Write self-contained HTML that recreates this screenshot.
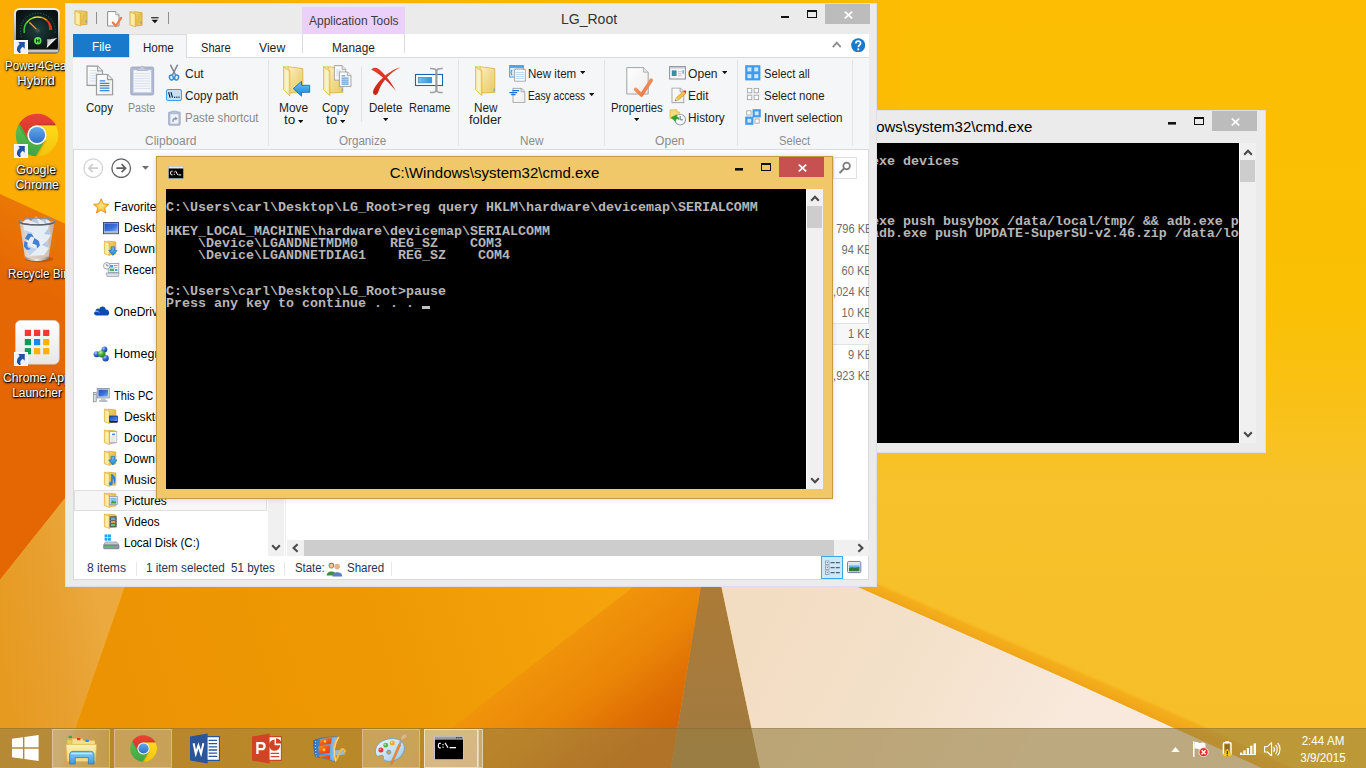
<!DOCTYPE html>
<html>
<head>
<meta charset="utf-8">
<title>Desktop</title>
<style>
*{box-sizing:border-box;margin:0;padding:0}
html,body{width:1366px;height:768px;overflow:hidden;background:#FCBD03;font-family:"Liberation Sans",sans-serif;}
.abs{position:absolute}
#wall{position:absolute;left:0;top:0;width:1366px;height:768px}
/* desktop icons */
.dlabel{position:absolute;color:#fff;font-size:12.5px;line-height:15px;text-align:center;white-space:nowrap;text-shadow:1px 1px 1px rgba(0,0,0,.95),0 1px 2px rgba(0,0,0,.85),0 0 3px rgba(0,0,0,.55)}
.dlabel span{display:inline-block;transform-origin:50% 50%;transform:scaleX(.93)}
/* cmd windows */
.cmd{position:absolute;width:677px;height:343px}
.cmd .blk{position:absolute;left:10px;top:33px;width:640px;height:300px;background:#000;overflow:hidden}
.cmd .sb{position:absolute;left:650px;top:33px;width:17px;height:300px;background:#F0F0F0;border-left:1px solid #fff}
.cmd .thumb{position:absolute;left:0px;top:17px;width:15px;height:22px;background:#CDCDCD}
.cmd .ttl{position:absolute;left:0;top:6px;width:677px;text-align:center;font-size:15.5px;line-height:22px;transform:scaleX(0.969);color:#000;white-space:nowrap}
.row{position:absolute;left:0;margin-top:1px;height:12px;line-height:12px;font-family:"Liberation Mono",monospace;font-weight:bold;font-size:13.333px;color:#B6B6B6;white-space:pre;letter-spacing:0}
/* explorer */
#exp{position:absolute;left:65px;top:3px;width:812px;height:584px;background:#EBEBEB;box-shadow:inset 0 0 0 1px #DCDFE8}
#expi{position:absolute;left:1px;top:0;width:810px;height:584px}
.t12{position:absolute;font-size:12px;line-height:14px;color:#1E1E1E;white-space:nowrap}
.gray{color:#8A8A8A}
.grp{position:absolute;font-size:12px;line-height:14px;color:#8C8C8C;white-space:nowrap;text-align:center}
.vsep{position:absolute;width:1px;background:#E2E3E4}
.nav{position:absolute;margin-top:1px;font-size:12px;line-height:14px;color:#000;white-space:nowrap}

.s{display:inline-block;transform-origin:0 50%;transform:scaleX(.92)}
.sc{display:inline-block;transform-origin:50% 50%}
.sz{position:absolute;margin-top:1px;right:-3px;font-size:12px;line-height:14px;color:#6D6D6D;white-space:nowrap;transform-origin:100% 50%;transform:scaleX(.92)}
.st{position:absolute;font-size:12px;line-height:14px;color:#1E3555;white-space:nowrap}
/* taskbar */
.clk{position:absolute;left:1283px;width:80px;text-align:center;color:#fff;font-size:12px;line-height:14px;white-space:nowrap;transform:scaleX(.97)}
#tb{position:absolute;left:0;top:728px;width:1366px;height:40px;background:rgba(150,127,66,.6)}
.tbtn{position:absolute;top:1px;height:39px;background:rgba(255,255,255,.22);box-shadow:inset 0 0 0 1px rgba(255,255,255,.28)}
</style>
</head>
<body>
<!-- WALLPAPER -->
<svg id="wall" viewBox="0 0 1366 768">
<defs>
<linearGradient id="gRight" x1="0" y1="0" x2="0" y2="1"><stop offset="0" stop-color="#FCBD03"/><stop offset=".39" stop-color="#FAC004"/><stop offset=".52" stop-color="#F9C116"/><stop offset=".63" stop-color="#F7C22B"/><stop offset="1" stop-color="#F6BD27"/></linearGradient>
<linearGradient id="gTopL" x1="0" y1="0" x2="1" y2="0"><stop offset="0" stop-color="#FBAD03"/><stop offset="1" stop-color="#FCBC03"/></linearGradient>
<linearGradient id="gDk" gradientUnits="userSpaceOnUse" x1="35" y1="210" x2="5" y2="276"><stop offset="0" stop-color="#EA7806"/><stop offset="1" stop-color="#E56703"/></linearGradient>
<linearGradient id="gBand" gradientUnits="userSpaceOnUse" x1="0" y1="660" x2="105" y2="640"><stop offset="0" stop-color="#E69A20"/><stop offset=".6" stop-color="#E8A030"/><stop offset="1" stop-color="#EBA93E"/></linearGradient>
<linearGradient id="gMain" gradientUnits="userSpaceOnUse" x1="120" y1="740" x2="640" y2="590"><stop offset="0" stop-color="#EC9303"/><stop offset=".5" stop-color="#EE9903"/><stop offset=".8" stop-color="#F3A009"/><stop offset="1" stop-color="#F6A40D"/></linearGradient>
<linearGradient id="gOr" gradientUnits="userSpaceOnUse" x1="540" y1="660" x2="625.800" y2="770.600"><stop offset="0" stop-color="#F0940A"/><stop offset=".4" stop-color="#EA8607"/><stop offset=".75" stop-color="#DE6E04"/><stop offset="1" stop-color="#D66202"/></linearGradient>
<linearGradient id="gCream" gradientUnits="userSpaceOnUse" x1="760" y1="600" x2="1050" y2="760"><stop offset="0" stop-color="#F2DDC2"/><stop offset=".5" stop-color="#F4E1CA"/><stop offset="1" stop-color="#F8E9DC"/></linearGradient>
<linearGradient id="gShadow" x1="0" y1="0" x2="0" y2="1"><stop offset="0" stop-color="#AC7B36"/><stop offset="1" stop-color="#A07A42"/></linearGradient>
<linearGradient id="gEdge" gradientUnits="userSpaceOnUse" x1="1000" y1="649.600" x2="1005.500" y2="637"><stop offset="0" stop-color="#F0A519"/><stop offset=".7" stop-color="#F4AE1C" stop-opacity=".95"/><stop offset="1" stop-color="#F8B820" stop-opacity="0"/></linearGradient>
</defs>
<rect width="1366" height="768" fill="url(#gRight)"/>
<rect width="900" height="240" fill="url(#gTopL)"/>
<polygon points="0,194 80,230.600 80,479.400 0,580" fill="url(#gDk)"/>
<polygon points="0,580 80,479.400 170,479 127,580 75.600,727.600 61,768 0,768" fill="url(#gBand)"/>
<polygon points="127,580 720,580 690,768 61,768 75.600,727.600" fill="url(#gMain)"/>
<polygon points="642.300,580 702,580 671,768 399.800,768" fill="url(#gOr)"/>
<polygon points="702,580 720,580 760,768 671,768" fill="url(#gShadow)"/>
<polygon points="720,580 842.500,580 866,590.400 1066,678.800 1173.600,727.800 1262,768 760,768" fill="url(#gCream)"/>
<polygon points="842.500,580 866,590.400 1066,678.800 1173.600,727.800 1262,768 1292,768 1179.600,714.800 1072,665.800 872,577.400 848.500,567" fill="url(#gEdge)"/>
</svg>

<!-- SYMBOL DEFS -->
<svg width="0" height="0" style="position:absolute">
<defs>
<linearGradient id="cRed" x1="0" y1="0" x2="0" y2="1"><stop offset="0" stop-color="#EA4335"/><stop offset="1" stop-color="#D2342A"/></linearGradient>
<linearGradient id="cYel" x1="0" y1="0" x2="0" y2="1"><stop offset="0" stop-color="#FFD91A"/><stop offset="1" stop-color="#F2C40C"/></linearGradient>
<linearGradient id="cGrn" x1="0" y1="0" x2="0" y2="1"><stop offset="0" stop-color="#5CC04F"/><stop offset="1" stop-color="#3FA444"/></linearGradient>
<linearGradient id="cBlu" x1="0" y1="0" x2="0" y2="1"><stop offset="0" stop-color="#62AAEA"/><stop offset="1" stop-color="#2E6FC6"/></linearGradient>
<symbol id="chrome" viewBox="0 0 46 46">
<path d="M14.69,27.80 L5.24,11.43 A21.2,21.2 0 0 1 41.90,13.40 L23.00,13.40 A9.6,9.6 0 0 0 14.69,27.80 Z" fill="url(#cRed)"/>
<path d="M23.00,13.40 L41.90,13.40 A21.2,21.2 0 0 1 21.86,44.17 L31.31,27.80 A9.6,9.6 0 0 0 23.00,13.40 Z" fill="url(#cYel)"/>
<path d="M31.31,27.80 L21.86,44.17 A21.2,21.2 0 0 1 5.24,11.43 L14.69,27.80 A9.6,9.6 0 0 0 31.31,27.80 Z" fill="url(#cGrn)"/>
<path d="M23.00,13.40 L41.90,13.40 L41,11.6 L26,12.2Z" fill="#000" opacity=".12"/>
<path d="M31.31,27.80 L21.86,44.17 L24,44.1 L32.6,29Z" fill="#000" opacity=".10"/>
<path d="M14.69,27.80 L5.24,11.43 L4.3,13.2 L13.2,28.6Z" fill="#000" opacity=".12"/>
<circle cx="23" cy="23" r="9.7" fill="#F6F6F6"/>
<circle cx="23" cy="23" r="8.1" fill="url(#cBlu)"/>
</symbol>
<linearGradient id="fBack" x1="0" y1="0" x2="1" y2="1"><stop offset="0" stop-color="#FBF2C0"/><stop offset=".5" stop-color="#F0DB8A"/><stop offset="1" stop-color="#E9CB62"/></linearGradient>
<linearGradient id="fFront" x1="0" y1="0" x2="1" y2="0"><stop offset="0" stop-color="#F7E49A"/><stop offset=".5" stop-color="#FDF6D2"/><stop offset="1" stop-color="#F3DC86"/></linearGradient>
<symbol id="folder" viewBox="0 0 22 32">
<path d="M5,1.4 L20.2,3.4 L20.2,27.6 L7,28.2 Z" fill="url(#fBack)" stroke="#E2B548" stroke-width=".9" stroke-linejoin="round"/>
<path d="M.6,1.5 L7,6.2 L7,31 L.6,24.8 Z" fill="url(#fFront)" stroke="#E4B94C" stroke-width=".9" stroke-linejoin="round"/>
<path d="M.6,1.5 L5,1.4 L7,6.2Z" fill="#F6E296" stroke="#E4B94C" stroke-width=".6"/>
</symbol>
<linearGradient id="fBackS" x1="0" y1="0" x2="1" y2="1"><stop offset="0" stop-color="#F3DC80"/><stop offset=".5" stop-color="#E4BE4C"/><stop offset="1" stop-color="#E9C85E"/></linearGradient>
<linearGradient id="fFrontS" x1="0" y1="0" x2="1" y2="0"><stop offset="0" stop-color="#F6E08A"/><stop offset=".55" stop-color="#FCF0B4"/><stop offset="1" stop-color="#EED06A"/></linearGradient>
<symbol id="folderS" viewBox="0 0 16 16">
<path d="M6.600,1.200 L13.800,2 L13.800,14 L7.600,14.400 Z" fill="url(#fBackS)" stroke="#D9AA3C" stroke-width=".8" stroke-linejoin="round"/>
<path d="M2.400,1.200 L7.800,3.400 L7.800,15.600 L2.400,13.600 Z" fill="url(#fFrontS)" stroke="#DFB244" stroke-width=".8" stroke-linejoin="round"/>
<path d="M2.400,1.200 L6.600,1.200 L7.800,3.400Z" fill="#F4DC84" stroke="#DFB244" stroke-width=".5"/>
</symbol>
<linearGradient id="pgW" x1="0" y1="0" x2="1" y2="1"><stop offset="0" stop-color="#FFFFFF"/><stop offset="1" stop-color="#EDEDED"/></linearGradient>
<symbol id="page" viewBox="0 0 13 16">
<path d="M.6,.6 H8.6 L12.4,4.4 V15.4 H.6 Z" fill="url(#pgW)" stroke="#9C9C9C" stroke-width="1"/>
<path d="M8.6,.6 V4.4 H12.4" fill="#E8E8E8" stroke="#9C9C9C" stroke-width=".8"/>
</symbol>
<linearGradient id="arB" x1="0" y1="0" x2="0" y2="1"><stop offset="0" stop-color="#6CC3F4"/><stop offset="1" stop-color="#1B86D6"/></linearGradient>
<symbol id="dd" viewBox="0 0 5 3"><path d="M0,0 H5 L2.5,3Z" fill="#111"/></symbol>
<symbol id="cmdico" viewBox="0 0 16 13">
<rect x="0" y="0" width="16" height="13" fill="#B8B8B8"/>
<rect x=".8" y=".6" width="14.400" height="1.600" fill="#E8E8E8"/>
<rect x=".8" y="2.600" width="14.400" height="9.600" fill="#000"/>
<path d="M4.600,5.200 H3.200 C2.400,5.200 2.400,8.800 3.200,8.800 H4.600" fill="none" stroke="#fff" stroke-width="1"/>
<rect x="5.800" y="5.600" width="1" height="1" fill="#fff"/><rect x="5.800" y="7.800" width="1" height="1" fill="#fff"/>
<path d="M7.600,4.800 L9.600,8.800" stroke="#fff" stroke-width="1"/>
<rect x="10.400" y="8.400" width="2.800" height="1" fill="#fff"/>
</symbol>
<symbol id="shortcut" viewBox="0 0 14 14">
<rect width="14" height="14" fill="#EEF2F4"/>
<rect x=".5" y=".5" width="13" height="13" fill="none" stroke="#fff" stroke-opacity=".9"/>
<path d="M4.400,2.100 L10.800,2 L10.700,8.700 L8.800,6.800 C6.500,8.200 5.700,10 6.700,12.400 L5.300,12.700 C2.500,11 1.900,7.400 5.700,4 Z" fill="#1E54A2"/>
<path d="M5.300,12.700 C3.600,11.600 2.800,10 3,8.200 C3.600,10 4.600,11.400 6.700,12.400Z" fill="#103C84"/>
</symbol>
</defs>
</svg>
<!-- DESKTOP ICONS -->
<svg class="abs" style="left:14px;top:8px" width="46" height="46" viewBox="0 0 46 46">
<defs>
<linearGradient id="pgF" x1="0" y1="0" x2="0" y2="1"><stop offset="0" stop-color="#F2F2F2"/><stop offset=".5" stop-color="#B8B8B8"/><stop offset="1" stop-color="#7C7C7C"/></linearGradient>
<radialGradient id="pgI" cx=".5" cy=".5" r=".6"><stop offset="0" stop-color="#1F4042"/><stop offset=".6" stop-color="#10201F"/><stop offset="1" stop-color="#0A1112"/></radialGradient>
<linearGradient id="pgA" x1="0" y1="0" x2="1" y2="0"><stop offset="0" stop-color="#3FD23A"/><stop offset=".45" stop-color="#E6E02A"/><stop offset=".75" stop-color="#F59A1E"/><stop offset="1" stop-color="#E8281C"/></linearGradient>
<linearGradient id="pgB" x1="0" y1="0" x2="0" y2="1"><stop offset="0" stop-color="#3A3A3A"/><stop offset=".5" stop-color="#E8E8E8"/><stop offset="1" stop-color="#8A8A8A"/></linearGradient>
<linearGradient id="pgC" x1="0" y1="0" x2="1" y2="1"><stop offset="0" stop-color="#9A9A9A"/><stop offset=".5" stop-color="#F4F4F4"/><stop offset=".55" stop-color="#1A1A1A"/><stop offset="1" stop-color="#0C0C0C"/></linearGradient>
</defs>
<rect x="0" y="0" width="46" height="46" rx="5.5" fill="url(#pgF)"/>
<rect x="2" y="2" width="42" height="40" rx="3.5" fill="url(#pgI)"/>
<rect x="2" y="41" width="42" height="3.6" rx="1.5" fill="url(#pgB)"/>
<path d="M7.67,29.12 A17.4,17.4 0 1 1 40.82,26.22" fill="none" stroke="#2F6E6C" stroke-width="1" stroke-dasharray="1.1 1.7" opacity=".95"/>
<path d="M10.31,24.98 A13.7,13.7 0 0 1 12.72,14.55" fill="none" stroke="#35C83A" stroke-width="1.5"/>
<path d="M12.58,14.74 A13.7,13.7 0 0 1 19.34,9.65" fill="none" stroke="#8FD82E" stroke-width="1.5"/>
<path d="M19.11,9.73 A13.7,13.7 0 0 1 27.58,9.43" fill="none" stroke="#E8DC28" stroke-width="1.5"/>
<path d="M27.35,9.37 A13.7,13.7 0 0 1 33.14,12.58" fill="none" stroke="#F5A31E" stroke-width="1.5"/>
<path d="M33.06,11.57 A14.5,14.5 0 0 1 38.38,21.84 L34.98,22.01 A12,12 0 0 0 32.16,12.64 Z" fill="#E6301E"/>
<path d="M23.800,22.600 L15.800,14.800" stroke="#F7A324" stroke-width="1.3" stroke-linecap="round"/>
<circle cx="23.800" cy="22.600" r="2.100" fill="#4A4E50"/>
<circle cx="23.8" cy="32.8" r="3.7" fill="#63E05C"/>
<path d="M22.5,31 v3.6 M25.1,31 v3.6 M22.5,32.8 h2.6" stroke="#0C3A10" stroke-width="1"/>
<path d="M32.6,40.2 L43.2,29.8 L43.2,40.2 Z" fill="#0B0B0B"/>
<path d="M32.6,40.2 L43.2,29.8 C39,31 35.5,31.5 33,31.2 C33.6,34 33.4,37.5 32.6,40.2 Z" fill="url(#pgC)"/>
</svg>
<svg class="abs" style="left:14px;top:40px" width="14" height="14"><use href="#shortcut"/></svg>
<div class="dlabel" style="left:5px;top:59px;width:120px;text-align:left"><span style="transform-origin:0 50%;transform:scaleX(.93)">Power4Gear</span></div>
<div class="dlabel" style="left:0px;top:74px;width:72px"><span style="transform:scaleX(1.04)">Hybrid</span></div>

<svg class="abs" style="left:14px;top:112.400px" width="46" height="46"><use href="#chrome"/></svg>
<svg class="abs" style="left:14px;top:144px" width="14" height="14"><use href="#shortcut"/></svg>
<div class="dlabel" style="left:0px;top:163px;width:72px"><span style="transform:scaleX(.985)">Google</span></div>
<div class="dlabel" style="left:0px;top:178px;width:73.600px"><span style="transform:scaleX(.975)">Chrome</span></div>

<svg class="abs" style="left:17px;top:215px" width="40" height="48" viewBox="0 0 40 48">
<defs>
<linearGradient id="rbG" x1="0" y1="0" x2="1" y2="0"><stop offset="0" stop-color="#C5CED8" stop-opacity=".85"/><stop offset=".25" stop-color="#EEF3F8" stop-opacity=".8"/><stop offset=".7" stop-color="#DCE5EE" stop-opacity=".75"/><stop offset="1" stop-color="#AEB8C4" stop-opacity=".85"/></linearGradient>
<linearGradient id="rbB" x1="0" y1="0" x2="1" y2="0"><stop offset="0" stop-color="#8C8F94"/><stop offset=".5" stop-color="#F2F2F2"/><stop offset="1" stop-color="#7E8288"/></linearGradient>
</defs>
<ellipse cx="22" cy="44" rx="14" ry="3.2" fill="#6B3206" opacity=".35"/>
<path d="M2.5,6.5 L8,43 C12,46.5 27,46.5 31.5,43 L37.5,6.5 Z" fill="url(#rbG)"/>
<path d="M8,41 C12,45 27,45 31.5,41 L31.2,43.3 C27,46.8 12,46.8 8.3,43.3Z" fill="url(#rbB)"/>
<path d="M6,7 L10,3 L14,6 L19,1.5 L24,5 L28,2.5 L33,6.5 L31,14 L34,20 L30,26 L32,33 L27,40 L12,41 L9,30 L11,22 L7,15 Z" fill="#E6EEF8" opacity=".97"/>
<path d="M14,6 L19,1.5 L22,9 Z M24,5 L28,2.5 L30,10 Z M31,14 L34,20 L27,19 Z M30,26 L32,33 L25,30Z" fill="#B4C8E0"/>
<path d="M9,30 L20,34 L12,41 Z M11,22 L7,15 L16,18Z" fill="#C2D2E6"/>
<g fill="#3F7FD6" transform="translate(-2.600,4.400)">
<path d="M10.5,19 L13.5,14 L17.5,14.5 L19.5,18 L16.5,17.2 L14,21Z"/>
<path d="M20,18.5 L24.5,21.5 L25.5,26 L22.5,29 L22.2,25.5 L18,24 Z"/>
<path d="M10,21.5 L13.2,23.2 L13,27.5 L16.5,29.5 L12.5,30.5 L9.5,27 Z"/>
</g>
<ellipse cx="20" cy="6.5" rx="17.6" ry="3.4" fill="none" stroke="#8A9098" stroke-width="1.4"/>
<path d="M2.4,6.5 A17.6,3.4 0 0 0 37.6,6.5" fill="none" stroke="#5C6168" stroke-width="1.2"/>
</svg>
<div class="dlabel" style="left:8px;top:267px;width:120px;text-align:left"><span style="transform-origin:0 50%;transform:scaleX(.935)">Recycle Bin</span></div>

<svg class="abs" style="left:15px;top:320px" width="45" height="45" viewBox="0 0 45 45">
<defs><linearGradient id="alG" x1="0" y1="0" x2="0" y2="1"><stop offset="0" stop-color="#FFFFFF"/><stop offset="1" stop-color="#E6E6E6"/></linearGradient></defs>
<rect x=".3" y=".3" width="44" height="44" rx="5.5" fill="url(#alG)"/>
<rect x=".3" y=".3" width="44" height="44" rx="5.5" fill="none" stroke="#C9C2B8" stroke-width=".6"/>
<g>
<rect x="9.8" y="9.8" width="6.2" height="6.2" fill="#F8382F"/><rect x="19" y="9.8" width="6.2" height="6.2" fill="#F8382F"/><rect x="28.1" y="9.8" width="6.2" height="6.2" fill="#F8382F"/>
<rect x="9.8" y="19" width="6.2" height="6.2" fill="#0B9D58"/><rect x="19" y="19" width="6.2" height="6.2" fill="#1B87E6"/><rect x="28.1" y="19" width="6.2" height="6.2" fill="#FFB000"/>
<rect x="9.8" y="28.1" width="6.2" height="6.2" fill="#0B9D58"/><rect x="19" y="28.1" width="6.2" height="6.2" fill="#FFB000"/><rect x="28.1" y="28.1" width="6.2" height="6.2" fill="#FFB000"/>
</g>
</svg>
<svg class="abs" style="left:14px;top:352px" width="14" height="14"><use href="#shortcut"/></svg>
<div class="dlabel" style="left:3px;top:371px;width:120px;text-align:left"><span style="transform-origin:0 50%;transform:scaleX(.975)">Chrome App</span></div>
<div class="dlabel" style="left:0px;top:386px;width:73.400px"><span style="transform:scaleX(.955)">Launcher</span></div>

<!-- BACK CMD -->
<div class="cmd" id="cmd2" style="left:589px;top:110px;background:#EBEBEB;box-shadow:inset 0 0 0 1px #DCDFE8">
  <div class="ttl">C:\Windows\system32\cmd.exe</div>
  <div class="abs" style="left:623px;top:1px;width:45px;height:20px;background:#BCBCBC"></div>
  <div class="blk">
    <div class="row" style="top:12px">C:\Users\carl\Desktop\LG_Root&gt;adb.exe devices</div>
    <div class="row" style="top:72px">C:\Users\carl\Desktop\LG_Root&gt;adb.exe push busybox /data/local/tmp/ &amp;&amp; adb.exe p</div>
    <div class="row" style="top:84px">ush lg_root.sh /data/local/tmp &amp;&amp; adb.exe push UPDATE-SuperSU-v2.46.zip /data/lo</div>
  </div>
  <div class="sb"><div class="thumb"></div></div>
  <svg class="abs" style="left:12px;top:10px" width="16" height="13"><use href="#cmdico"/></svg>
  <svg class="abs" style="left:579px;top:12.400px" width="8" height="2.600"><rect width="8" height="2.600" fill="#111"/></svg>
  <svg class="abs" style="left:605px;top:7px" width="10" height="8" viewBox="0 0 10 8"><rect x=".5" y="1" width="9" height="6.500" fill="none" stroke="#111" stroke-width="1"/><rect x="0" y="0" width="10" height="2" fill="#111"/></svg>
  <svg class="abs" style="left:641.500px;top:7.600px" width="9" height="8" viewBox="0 0 9 8"><path d="M.8,.6 L8.200,7.400 M8.200,.6 L.8,7.400" stroke="#fff" stroke-width="1.700"/></svg>
  <svg class="abs" style="left:654px;top:39px" width="10" height="7" viewBox="0 0 10 7"><path d="M1.200,5.800 L5,1.800 L8.800,5.800" fill="none" stroke="#4A4A4A" stroke-width="2.100"/></svg>
  <svg class="abs" style="left:654px;top:321px" width="10" height="7" viewBox="0 0 10 7"><path d="M1.200,1.200 L5,5.200 L8.800,1.200" fill="none" stroke="#4A4A4A" stroke-width="2.100"/></svg>
</div>

<!-- EXPLORER -->
<div id="exp"><div id="expi">
  <!-- title bar -->
  <div class="abs" style="left:0;top:0;width:810px;height:31px"></div>
  <div class="abs" style="left:236px;top:4px;width:103px;height:27px;background:#EBD0FA"></div>
  <div class="t12" style="left:243px;top:11px;color:#3C3C3C"><span class="s" style="transform:scaleX(0.997)">Application Tools</span></div>
  <div class="abs" style="left:0;top:6px;width:1046px;text-align:center;font-size:15.5px;line-height:20px;color:#333"><span class="sc" style="transform:scaleX(0.906)">LG_Root</span></div>
  <div class="abs" style="left:759px;top:1px;width:45px;height:20px;background:#BCBCBC"></div>
  <!-- tab row -->
  <div class="abs" style="left:7px;top:31px;width:796px;height:23px;background:#fff"></div>
  <div class="abs" style="left:7px;top:31px;width:56px;height:23px;background:#1979CA"></div>
  <div class="t12" style="left:26px;top:37px;color:#fff"><span class="s" style="transform:scaleX(0.982)">File</span></div>
  <div class="abs" style="left:63px;top:31px;width:58px;height:24px;background:#F5F6F7;border:1px solid #DADBDC;border-bottom:none;z-index:2"></div>
  <div class="t12" style="left:77px;top:38px;z-index:3"><span class="s" style="transform:scaleX(0.962)">Home</span></div>
  <div class="t12" style="left:135px;top:38px"><span class="s" style="transform:scaleX(0.924)">Share</span></div>
  <div class="t12" style="left:193px;top:38px"><span class="s" style="transform:scaleX(1.016)">View</span></div>
  <div class="abs" style="left:236px;top:31px;width:1px;height:19px;background:#DADBDC"></div>
  <div class="abs" style="left:338px;top:31px;width:1px;height:19px;background:#DADBDC"></div>
  <div class="t12" style="left:266px;top:38px"><span class="s" style="transform:scaleX(0.987)">Manage</span></div>
  <!-- ribbon body -->
  <div class="abs" style="left:7px;top:54px;width:796px;height:93px;background:#F5F6F7;border-top:1px solid #DADBDC;border-bottom:1px solid #DADBDC"></div>
  <div class="t12" style="left:20px;top:98px"><span class="s" style="transform:scaleX(0.964)">Copy</span></div>
  <div class="t12 gray" style="left:62px;top:98px"><span class="s" style="transform:scaleX(0.886)">Paste</span></div>
  <div class="t12" style="left:119px;top:64px"><span class="s" style="transform:scaleX(1.001)">Cut</span></div>
  <div class="t12" style="left:119px;top:86px"><span class="s" style="transform:scaleX(0.974)">Copy path</span></div>
  <div class="t12 gray" style="left:119px;top:108px"><span class="s" style="transform:scaleX(0.959)">Paste shortcut</span></div>
  <div class="grp" style="left:79px;top:131px"><span class="s" style="transform:scaleX(0.999)">Clipboard</span></div>
  <div class="vsep" style="left:202px;top:57px;height:86px"></div>
  <div class="t12" style="left:213px;top:98px"><span class="s" style="transform:scaleX(0.992)">Move</span></div>
  <div class="t12" style="left:218px;top:110px"><span class="s" style="transform:scaleX(1.130)">to</span></div>
  <div class="t12" style="left:256px;top:98px"><span class="s" style="transform:scaleX(0.964)">Copy</span></div>
  <div class="t12" style="left:260px;top:110px"><span class="s" style="transform:scaleX(1.130)">to</span></div>
  <div class="vsep" style="left:295px;top:64px;height:55px"></div>
  <div class="t12" style="left:303px;top:98px"><span class="s" style="transform:scaleX(0.963)">Delete</span></div>
  <div class="t12" style="left:343px;top:98px"><span class="s" style="transform:scaleX(0.913)">Rename</span></div>
  <div class="grp" style="left:273px;top:131px"><span class="s" style="transform:scaleX(0.969)">Organize</span></div>
  <div class="vsep" style="left:392px;top:57px;height:86px"></div>
  <div class="t12" style="left:408px;top:98px"><span class="s" style="transform:scaleX(0.979)">New</span></div>
  <div class="t12" style="left:403px;top:110px"><span class="s" style="transform:scaleX(1.079)">folder</span></div>
  <div class="t12" style="left:462px;top:64px"><span class="s" style="transform:scaleX(0.964)">New item</span></div>
  <div class="t12" style="left:462px;top:86px"><span class="s" style="transform:scaleX(0.849)">Easy access</span></div>
  <div class="grp" style="left:454px;top:131px"><span class="s" style="transform:scaleX(0.979)">New</span></div>
  <div class="vsep" style="left:538px;top:57px;height:86px"></div>
  <div class="t12" style="left:545px;top:98px"><span class="s" style="transform:scaleX(0.947)">Properties</span></div>
  <div class="t12" style="left:622px;top:64px"><span class="s" style="transform:scaleX(1.008)">Open</span></div>
  <div class="t12" style="left:622px;top:86px"><span class="s" style="transform:scaleX(0.991)">Edit</span></div>
  <div class="t12" style="left:622px;top:108px"><span class="s" style="transform:scaleX(0.985)">History</span></div>
  <div class="grp" style="left:589px;top:131px"><span class="s" style="transform:scaleX(1.008)">Open</span></div>
  <div class="vsep" style="left:671px;top:57px;height:86px"></div>
  <div class="t12" style="left:698px;top:64px"><span class="s" style="transform:scaleX(0.938)">Select all</span></div>
  <div class="t12" style="left:698px;top:86px"><span class="s" style="transform:scaleX(0.956)">Select none</span></div>
  <div class="t12" style="left:698px;top:108px"><span class="s" style="transform:scaleX(0.974)">Invert selection</span></div>
  <div class="grp" style="left:713px;top:131px"><span class="s" style="transform:scaleX(0.935)">Select</span></div>
  <div class="vsep" style="left:786px;top:57px;height:86px"></div>
<!-- RIBBON ICONS -->
<svg class="abs" style="left:20px;top:62px" width="28" height="31" viewBox="0 0 28 31">
<g transform="translate(.2,.2) scale(1.32)"><use href="#page" width="13" height="16"/><path d="M2.5,4 h5 M2.5,6 h7.5 M2.5,8 h7.5 M2.5,10 h7.5 M2.5,12 h7.5" stroke="#CFE0F2" stroke-width=".7"/></g>
<g transform="translate(9.6,8.6) scale(1.38)"><use href="#page" width="13" height="16"/><path d="M3,5.2 h4 M3,7 h7 M3,8.8 h7 M3,10.6 h7 M3,12.4 h7" stroke="#3D86D4" stroke-width=".9"/></g>
</svg>
<svg class="abs" style="left:64px;top:61px" width="25" height="32" viewBox="0 0 25 32">
<rect x=".7" y="3" width="23" height="28" rx="1.6" fill="#AEB8D0" stroke="#9CA6C0" stroke-width=".8"/>
<rect x="3.2" y="6" width="18" height="22.6" fill="#F4F6FA" stroke="#C4CCDE" stroke-width=".6"/>
<path d="M4.5,9.5h15.4M4.5,12h15.4M4.5,14.5h15.4M4.5,17h15.4M4.5,19.500h15.4M4.5,22h15.4M4.5,24.500h15.4" stroke="#D3DBEA" stroke-width=".8"/>
<path d="M7,6.4 V4.2 H10 C10,1.6 14.4,1.6 14.4,4.2 H17.400 V6.400 Z" fill="#C3CBDD" stroke="#A2ACC4" stroke-width=".7"/>
</svg>
<svg class="abs" style="left:101px;top:61px" width="14" height="18" viewBox="0 0 14 18">
<path d="M3.6,1.2 L8.6,11.2 M10.400,1.2 L5.4,11.2" stroke="#7E8794" stroke-width="1.5" stroke-linecap="round"/>
<ellipse cx="4.4" cy="13.600" rx="1.900" ry="2.500" fill="none" stroke="#2E8FDD" stroke-width="1.5" transform="rotate(-18 4.4 13.6)"/>
<ellipse cx="9.600" cy="13.600" rx="1.900" ry="2.500" fill="none" stroke="#2E8FDD" stroke-width="1.5" transform="rotate(18 9.6 13.6)"/>
</svg>
<svg class="abs" style="left:100px;top:86px" width="16" height="12" viewBox="0 0 16 12">
<rect x=".5" y=".5" width="15" height="11" rx="1.5" fill="#BFE1FB" stroke="#3F9CE6"/>
<path d="M2.6,3.2 L4.1,8.6 M5,3.2 L6.500,8.600" stroke="#1A1A1A" stroke-width="1.1"/>
<rect x="8" y="7.600" width="1.2" height="1.2" fill="#1A1A1A"/><rect x="10.200" y="7.600" width="1.2" height="1.2" fill="#1A1A1A"/><rect x="12.400" y="7.600" width="1.2" height="1.2" fill="#1A1A1A"/>
</svg>
<svg class="abs" style="left:102px;top:107px" width="13" height="16" viewBox="0 0 13 16">
<rect x=".6" y="2" width="11.6" height="13.2" rx="1" fill="#B4BED4" stroke="#9AA6C0" stroke-width=".8"/>
<rect x="2.4" y="4.200" width="8" height="9.400" fill="#EEF1F7"/>
<path d="M3.8,2.6 V1.2 H8.800 V2.600" fill="#C6CEDF" stroke="#9AA6C0" stroke-width=".7"/>
<path d="M4.2,12 C4,9 5.4,7.800 7.200,7.800 L7,6.400 L9.800,8.600 L7.400,10.600 L7.300,9.400 C6,9.400 5.400,10.200 5.600,12Z" fill="#8E9AB6"/>
</svg>
<svg class="abs" style="left:216.5px;top:61.5px" width="30" height="33" viewBox="0 0 30 33">
<use href="#folder" x="0" y="0" width="21.6" height="32"/>
<path d="M10.300,23.700 L18.500,16.300 V20.300 H26.700 V27.300 H18.500 V31.100 Z" fill="url(#arB)" stroke="#1670BE" stroke-width=".9" stroke-linejoin="round"/>
</svg>
<svg class="abs" style="left:256.5px;top:61.5px" width="31" height="33" viewBox="0 0 31 33">
<use href="#folder" x="0" y="0" width="21.6" height="32"/>
<rect x="18.600" y="23.500" width="1.1" height="2.600" fill="#5AA0E0"/>
<g transform="translate(10.700,.1) scale(.98)"><use href="#page" width="13" height="16"/><path d="M2.5,5 h4 M2.5,7 h5 M2.5,9 h5 M2.5,11 h5" stroke="#BBD3EE" stroke-width=".8"/></g>
<g transform="translate(15.700,6.300) scale(1)"><use href="#page" width="13" height="16"/><path d="M2.8,4.6 h3.600 M2.800,6.800 h7 M2.800,8.800 h7 M2.800,10.800 h7 M2.800,12.800 h7" stroke="#3D86D4" stroke-width="1"/></g>
</svg>
<svg class="abs" style="left:304px;top:63px" width="32" height="30" viewBox="0 0 32 30">
<defs><linearGradient id="dX" x1="0" y1="0" x2="0" y2="1"><stop offset="0" stop-color="#E8402C"/><stop offset="1" stop-color="#C8200F"/></linearGradient></defs>
<path d="M1.2,3.600 C3,1.400 6,1.200 8,2.600 C14,7 20.500,15 26,25.400 C20,17.500 12,9.500 1.200,3.600 Z" fill="url(#dX)"/>
<path d="M30.400,1.600 C22,3 11,12 5,21 C3,24 2,27.500 4.600,28.800 C7.500,29.800 8.200,26 9.200,23.600 C13,14.500 21,6 30.400,1.600 Z" fill="url(#dX)"/>
</svg>
<svg class="abs" style="left:348px;top:64px" width="31" height="27" viewBox="0 0 31 27">
<defs><linearGradient id="rnB" x1="0" y1="0" x2="1" y2="0"><stop offset="0" stop-color="#77C0F0"/><stop offset="1" stop-color="#2C93DA"/></linearGradient></defs>
<rect x="1.5" y="7.500" width="27" height="11" fill="#fff" stroke="#1764B2" stroke-width="1.100"/>
<rect x="4.200" y="10.300" width="13.600" height="5.600" fill="url(#rnB)" stroke="#2A86CE" stroke-width=".6"/>
<path d="M22.400,2 V25" stroke="#9A9A9A" stroke-width="2.200"/>
<path d="M16,1.500 C19,1.300 21.500,1.800 22.400,3.400 C23.300,1.800 25.800,1.300 28.800,1.500 M16,25.500 C19,25.700 21.500,25.200 22.400,23.600 C23.300,25.200 25.800,25.700 28.800,25.500" stroke="#A2A2A2" stroke-width="1.500" fill="none"/>
</svg>
<svg class="abs" style="left:408.5px;top:61.5px" width="23" height="33" viewBox="0 0 23 33">
<use href="#folder" x="0" y="0" width="21.6" height="32"/>
<rect x="18.600" y="23.500" width="1.1" height="2.600" fill="#5AA0E0"/>
</svg>
<svg class="abs" style="left:442.5px;top:61.5px" width="18" height="17" viewBox="0 0 18 17">
<rect x=".6" y=".6" width="13.800" height="11.400" fill="#D6EBFA" stroke="#4AA0E4" stroke-width="1"/>
<rect x=".6" y=".6" width="13.800" height="2.200" fill="#4AA0E4"/>
<path d="M3,5 C1.800,6.500 1.800,8.500 3,10" stroke="#2F7FCC" stroke-width="1" fill="none"/>
<path d="M5.600,4.400 H16.400 V16.200 H5.600Z" fill="#fff" stroke="#A0A0A0" stroke-width=".9"/>
<path d="M6.800,4.400 c.4,-1.400 1.400,-1.400 1.800,0 c.4,-1.400 1.400,-1.400 1.800,0 c.4,-1.400 1.400,-1.400 1.800,0 c.4,-1.400 1.400,-1.400 1.800,0" fill="#fff" stroke="#A0A0A0" stroke-width=".7"/>
<path d="M6.600,7.400h8.800M6.600,9.400h8.800M6.600,11.400h8.800M6.600,13.400h8.800" stroke="#A9C8EA" stroke-width=".8"/>
</svg>
<svg class="abs" style="left:442.5px;top:83.5px" width="18" height="17" viewBox="0 0 18 17">
<g transform="translate(3.300,.6) scale(1.020,.96)"><use href="#page" width="13" height="16"/></g>
<path d="M3.400,3.600 H10.200 M.4,5.600 H8.200 M2.200,7.600 H6.600" stroke="#1F6FE0" stroke-width="1.100"/>
</svg>
<svg class="abs" style="left:559.5px;top:63.5px" width="28" height="31" viewBox="0 0 28 31">
<defs><linearGradient id="prC" x1="0" y1="0" x2="1" y2="1"><stop offset="0" stop-color="#F6A070"/><stop offset="1" stop-color="#EC7038"/></linearGradient></defs>
<path d="M.8,.6 H17.600 L22.200,5.200 V27 H.8 Z" fill="url(#pgW)" stroke="#A2A2A2" stroke-width="1"/>
<path d="M17.600,.6 V5.200 H22.200" fill="#EAEAEA" stroke="#A2A2A2" stroke-width=".8"/>
<path d="M9.600,22.400 L15.500,28 L25.200,13.200" fill="none" stroke="url(#prC)" stroke-width="3.600" stroke-linecap="round" stroke-linejoin="round"/>
</svg>
<svg class="abs" style="left:602.5px;top:62.8px" width="17" height="14" viewBox="0 0 17 14">
<defs><linearGradient id="opG" x1="0" y1="0" x2="1" y2="1"><stop offset="0" stop-color="#2E7FD0"/><stop offset="1" stop-color="#3FA070"/></linearGradient></defs>
<rect x=".6" y=".6" width="15.800" height="12.400" fill="#F6F7F9" stroke="#8C8EA0" stroke-width="1"/>
<rect x="1" y="1" width="15" height="1.600" fill="#C6CAD6"/>
<rect x="2.800" y="4.400" width="4.800" height="5.600" fill="url(#opG)"/>
<path d="M9,5.600h3.600M9,7.600h3.600M9,9.600h3.600" stroke="#C2C2C8" stroke-width=".9"/>
<rect x="13.600" y="4.200" width="1" height="3.600" fill="#2E86D8"/>
</svg>
<svg class="abs" style="left:604.5px;top:83.8px" width="16" height="17" viewBox="0 0 16 17">
<g transform="translate(.3,.4) scale(1.020,1)"><use href="#page" width="13" height="16"/></g>
<path d="M4.200,13.800 L5.400,10.600 L12.600,4.200 L14.800,6.400 L7.400,12.900 Z" fill="#F4C544" stroke="#B98A1E" stroke-width=".6"/>
<path d="M12.600,4.200 L13.600,3.300 C14.400,2.700 15.800,4.100 15.200,5 L14.800,6.400Z" fill="#E0403A"/>
<path d="M4.200,13.800 L5.400,10.600 L7.400,12.900Z" fill="#E8D4A8"/>
<path d="M4.200,13.800 L4.700,12.500 L5.500,13.400Z" fill="#333"/>
</svg>
<svg class="abs" style="left:602.5px;top:105.5px" width="18" height="18" viewBox="0 0 18 18">
<path d="M1,.8 H8 V3 H10.400 V9.600 H1Z" fill="#F5DC7A" stroke="#E0B448" stroke-width=".7"/>
<circle cx="11.200" cy="10.600" r="5.400" fill="#F4F6F8" stroke="#9AA2AC" stroke-width="1.100"/>
<path d="M11.200,7 V10.800 H14" stroke="#6E7680" stroke-width="1" fill="none"/>
<path d="M2.200,8.600 L7.600,6 L7,8 C9,7.500 10,8.600 10,10.400 C9.200,9.600 8,9.700 6.600,10.400 L6.400,12.400Z" fill="#2FA82A" stroke="#1E8A1C" stroke-width=".5"/>
</svg>
<svg class="abs" style="left:678.5px;top:61.5px" width="16" height="16" viewBox="0 0 16 16">
<rect x=".2" y=".2" width="15.200" height="15.200" fill="#3F9BEE"/>
<rect x="2.400" y="2.400" width="4" height="4" fill="#CFE6FB"/><rect x="9.200" y="2.400" width="4" height="4" fill="#CFE6FB"/>
<rect x="2.400" y="9.200" width="4" height="4" fill="#CFE6FB"/><rect x="9.200" y="9.200" width="4" height="4" fill="#CFE6FB"/>
</svg>
<svg class="abs" style="left:679.5px;top:83.5px" width="15" height="15" viewBox="0 0 15 15">
<rect x="1.400" y="1.400" width="4.400" height="4.400" fill="#fff" stroke="#A6A6A6" stroke-width=".9"/><rect x="8.200" y="1.400" width="4.400" height="4.400" fill="#fff" stroke="#A6A6A6" stroke-width=".9"/>
<rect x="1.400" y="8.200" width="4.400" height="4.400" fill="#fff" stroke="#A6A6A6" stroke-width=".9"/><rect x="8.200" y="8.200" width="4.400" height="4.400" fill="#fff" stroke="#A6A6A6" stroke-width=".9"/>
</svg>
<svg class="abs" style="left:678.5px;top:105.5px" width="17" height="17" viewBox="0 0 17 17">
<rect x="7.600" y=".2" width="8.200" height="8.200" fill="#3F9BEE"/><rect x="9.800" y="2.400" width="3.800" height="3.800" fill="#CFE6FB"/>
<rect x=".2" y="7.600" width="8.200" height="8.200" fill="#3F9BEE"/><rect x="2.400" y="9.800" width="3.800" height="3.800" fill="#CFE6FB"/>
<rect x="1.800" y="1.800" width="4.200" height="4.200" fill="#fff" stroke="#A6A6A6" stroke-width=".9"/>
<rect x="10" y="10" width="4.200" height="4.200" fill="#fff" stroke="#A6A6A6" stroke-width=".9"/>
</svg>
<svg class="abs" style="left:231.5px;top:116.7px" width="5.4" height="3.2" viewBox="0 0 5.400 3.200"><use href="#dd" width="5.400" height="3.200"/></svg>
<svg class="abs" style="left:274px;top:116.7px" width="5.4" height="3.2" viewBox="0 0 5.400 3.200"><use href="#dd" width="5.400" height="3.200"/></svg>
<svg class="abs" style="left:316.6px;top:115px" width="5.4" height="3.2" viewBox="0 0 5.400 3.200"><use href="#dd" width="5.400" height="3.200"/></svg>
<svg class="abs" style="left:567.9px;top:115px" width="5.4" height="3.2" viewBox="0 0 5.400 3.200"><use href="#dd" width="5.400" height="3.200"/></svg>
<svg class="abs" style="left:513.9px;top:68.1px" width="5.4" height="3.2" viewBox="0 0 5.400 3.200"><use href="#dd" width="5.400" height="3.200"/></svg>
<svg class="abs" style="left:522.8px;top:90.1px" width="5.4" height="3.2" viewBox="0 0 5.400 3.200"><use href="#dd" width="5.400" height="3.200"/></svg>
<svg class="abs" style="left:656px;top:68.1px" width="5.4" height="3.2" viewBox="0 0 5.400 3.200"><use href="#dd" width="5.400" height="3.200"/></svg>
  <!-- body -->

  <div class="abs" style="left:7px;top:147px;width:796px;height:430px;background:#fff;border-left:1px solid #DADADA;border-bottom:1px solid #DADADA;border-right:1px solid #DADADA"></div>
  <!-- search box -->
  <div class="abs" style="left:767px;top:154px;width:24px;height:22px;border:1px solid #E2E2E2;background:#fff"></div>
  <!-- nav pane -->
  <div class="abs" style="left:8px;top:487px;width:193px;height:21px;background:#F6F6F6;border:1px solid #DEDEDE"></div>
  <div class="nav" style="left:48px;top:196px"><span class="s" style="transform:scaleX(0.977)">Favorites</span></div>
  <div class="nav" style="left:58px;top:217px"><span class="s" style="transform:scaleX(1.017)">Desktop</span></div>
  <div class="nav" style="left:58px;top:238px"><span class="s" style="transform:scaleX(1.015)">Downloads</span></div>
  <div class="nav" style="left:58px;top:259px"><span class="s" style="transform:scaleX(0.971)">Recent places</span></div>
  <div class="nav" style="left:48px;top:301px"><span class="s" style="transform:scaleX(0.999)">OneDrive</span></div>
  <div class="nav" style="left:48px;top:343px"><span class="s" style="transform:scaleX(1.045)">Homegroup</span></div>
  <div class="nav" style="left:48px;top:385px"><span class="s" style="transform:scaleX(0.920)">This PC</span></div>
  <div class="nav" style="left:58px;top:406px"><span class="s" style="transform:scaleX(1.017)">Desktop</span></div>
  <div class="nav" style="left:58px;top:427px"><span class="s" style="transform:scaleX(1.013)">Documents</span></div>
  <div class="nav" style="left:58px;top:448px"><span class="s" style="transform:scaleX(1.015)">Downloads</span></div>
  <div class="nav" style="left:58px;top:469px"><span class="s" style="transform:scaleX(1.012)">Music</span></div>
  <div class="nav" style="left:58px;top:490px"><span class="s" style="transform:scaleX(0.987)">Pictures</span></div>
  <div class="nav" style="left:58px;top:511px"><span class="s" style="transform:scaleX(0.976)">Videos</span></div>
  <div class="nav" style="left:58px;top:532px"><span class="s" style="transform:scaleX(0.962)">Local Disk (C:)</span></div>
  <div class="abs" style="left:202px;top:178px;width:16px;height:375px;background:#F0F0F0"></div><div class="abs" style="left:219px;top:178px;width:1px;height:375px;background:#EEE"></div>
  <!-- right col sizes -->
  <div class="abs" style="left:767px;top:320px;width:36px;height:22px;background:#F7F7F7;border-top:1px solid #E3E3E3;border-bottom:1px solid #E3E3E3"></div>
  <div class="abs" style="left:703px;top:178px;width:100px;height:240px;overflow:hidden">
    <div class="sz" style="top:40px">796 KB</div>
    <div class="sz" style="top:61px">94 KB</div>
    <div class="sz" style="top:82px">60 KB</div>
    <div class="sz" style="top:103px">1,024 KB</div>
    <div class="sz" style="top:124px">10 KB</div>
    <div class="sz" style="top:145px">1 KB</div>
    <div class="sz" style="top:166px">9 KB</div>
    <div class="sz" style="top:187px">1,923 KB</div>
  </div>
  <!-- hscroll -->
  <div class="abs" style="left:221px;top:537px;width:582px;height:16px;background:#F0F0F0"></div>
  <div class="abs" style="left:238px;top:537px;width:530px;height:16px;background:#CDCDCD"></div>
  <!-- status bar -->
  <div class="st" style="left:21px;top:558px"><span class="s" style="transform:scaleX(1.008)">8 items</span></div>
  <div class="st" style="left:80px;top:558px"><span class="s" style="transform:scaleX(0.975)">1 item selected</span></div>
  <div class="st" style="left:165px;top:558px"><span class="s" style="transform:scaleX(0.967)">51 bytes</span></div>
  <div class="st" style="left:229px;top:558px"><span class="s" style="transform:scaleX(0.947)">State:</span></div>
  <div class="st" style="left:281px;top:558px"><span class="s" style="transform:scaleX(0.961)">Shared</span></div>
  <div class="abs" style="left:70px;top:559px;width:1px;height:14px;background:#E8E8E8"></div>
  <div class="abs" style="left:218px;top:559px;width:1px;height:14px;background:#E8E8E8"></div>
  <div class="abs" style="left:325px;top:559px;width:1px;height:14px;background:#E8E8E8"></div>
  <div class="abs" style="left:755px;top:553px;width:22px;height:23px;background:#CDE8F8;border:1px solid #3DA7E0"></div>
<!-- TITLE/NAV ICONS -->
<svg class="abs" style="left:7.5px;top:7px" width="15" height="17" viewBox="0 0 15 17"><use href="#folderS" x="-1.600" y="-.5" width="17" height="17"/><rect x="11.600" y="10.400" width="1" height="2.200" fill="#4A9AE0"/></svg>
<div class="abs" style="left:30px;top:9px;width:1px;height:12px;background:#8E8E8E"></div>
<svg class="abs" style="left:41px;top:8px" width="16" height="17" viewBox="0 0 16 17">
<path d="M.6,.6 H8.800 L12,3.800 V15 H.6 Z" fill="#FCFCFC" stroke="#8E8E8E" stroke-width="1"/>
<path d="M8.800,.6 V3.800 H12" fill="#EAEAEA" stroke="#8E8E8E" stroke-width=".7"/>
<path d="M5.800,11.600 L8.800,15 L14.200,6.800" fill="none" stroke="#F07C48" stroke-width="2.200" stroke-linecap="round" stroke-linejoin="round"/>
</svg>
<svg class="abs" style="left:62.5px;top:8px" width="15" height="17" viewBox="0 0 15 17"><use href="#folderS" x="-1.600" y="-.5" width="17" height="17"/><rect x="11.600" y="10.400" width="1" height="2.200" fill="#4A9AE0"/></svg>
<svg class="abs" style="left:84.5px;top:13.8px" width="8" height="7" viewBox="0 0 8 7"><rect x=".2" y=".2" width="7.400" height="1.100" fill="#111"/><path d="M.6,2.800 H7.200 L3.900,6.200Z" fill="#111"/></svg>
<div class="abs" style="left:102px;top:9px;width:1px;height:12px;background:#8E8E8E"></div>
<svg class="abs" style="left:715px;top:12.6px" width="8" height="2.4" viewBox="0 0 8 2.4"><rect width="8" height="2.400" fill="#111"/></svg>
<svg class="abs" style="left:741px;top:7px" width="10" height="8" viewBox="0 0 10 8"><rect x=".5" y="1" width="9" height="6.500" fill="none" stroke="#111" stroke-width="1"/><rect x="0" y="0" width="10" height="2" fill="#111"/></svg>
<svg class="abs" style="left:777.5px;top:7.6px" width="9" height="8" viewBox="0 0 9 8"><path d="M.8,.6 L8.200,7.400 M8.200,.6 L.8,7.400" stroke="#fff" stroke-width="1.700"/></svg>
<svg class="abs" style="left:765.5px;top:38px" width="9.6" height="7" viewBox="0 0 9.6 7"><path d="M.8,6.200 L4.800,1.600 L8.800,6.200" fill="none" stroke="#8E8E8E" stroke-width="1.900"/></svg>
<svg class="abs" style="left:785px;top:34.8px" width="14.4" height="14.4" viewBox="0 0 14.4 14.4"><circle cx="7.200" cy="7.200" r="7" fill="#1979CA"/><path d="M4.900,5.400 C4.900,2.400 9.600,2.400 9.600,5.200 C9.600,7 7.300,7.200 7.300,9.200" fill="none" stroke="#fff" stroke-width="1.700"/><circle cx="7.300" cy="11.400" r="1.050" fill="#fff"/></svg>
<svg class="abs" style="left:16.5px;top:154.7px" width="20.4" height="20.4" viewBox="0 0 20.4 20.4"><circle cx="10.200" cy="10.200" r="9.300" fill="none" stroke="#D4D4D4" stroke-width="1.300"/><path d="M15,10.200 H6 M9.800,6.200 L5.800,10.200 L9.800,14.200" fill="none" stroke="#CFCFCF" stroke-width="1.700"/></svg>
<svg class="abs" style="left:45.3px;top:154.7px" width="20.4" height="20.4" viewBox="0 0 20.4 20.4"><circle cx="10.200" cy="10.200" r="9.300" fill="none" stroke="#5E5E5E" stroke-width="1.300"/><path d="M5.400,10.200 H14.400 M10.600,6.200 L14.600,10.200 L10.600,14.200" fill="none" stroke="#5E5E5E" stroke-width="1.700"/></svg>
<svg class="abs" style="left:75.8px;top:163px" width="7" height="4" viewBox="0 0 7 4"><path d="M0,0 H7 L3.500,3.800Z" fill="#6E6E6E"/></svg>
<svg class="abs" style="left:772px;top:158px" width="14" height="14" viewBox="0 0 14 14"><circle cx="8.600" cy="5" r="3.300" fill="none" stroke="#7A7A7A" stroke-width="1.700"/><path d="M6.200,7.400 L1.600,12" stroke="#7A7A7A" stroke-width="2"/></svg>
<svg class="abs" style="left:26.5px;top:195px" width="16.5" height="15.5" viewBox="0 0 16.5 15.5"><defs><radialGradient id="stG" cx=".5" cy=".45" r=".6"><stop offset="0" stop-color="#FFE68A"/><stop offset=".6" stop-color="#FDC63C"/><stop offset="1" stop-color="#F6A124"/></radialGradient></defs>
<path d="M8.200,.8 L10.400,5.800 L15.800,6.300 L11.700,9.900 L13,15 L8.200,12.200 L3.400,15 L4.700,9.900 L.6,6.300 L6,5.800 Z" fill="url(#stG)" stroke="#EE8A1E" stroke-width=".9" stroke-linejoin="round"/></svg>
<svg class="abs" style="left:37px;top:219.3px" width="16" height="12.4" viewBox="0 0 16 12.4"><defs><linearGradient id="dkG" x1="0" y1="0" x2="1" y2="1"><stop offset="0" stop-color="#2450C0"/><stop offset=".6" stop-color="#3E74DC"/><stop offset="1" stop-color="#8EB4F0"/></linearGradient></defs>
<rect x=".5" y=".5" width="15" height="11.200" fill="#C8D0DC" stroke="#2A3E78" stroke-width=".9"/>
<rect x="1.400" y="1.400" width="13.200" height="8" fill="url(#dkG)"/>
<rect x="1.400" y="9.400" width="13.200" height="1.800" fill="#AEB8C8"/></svg>
<svg class="abs" style="left:35.8px;top:237px" width="18" height="17" viewBox="0 0 18 17"><use href="#folderS" x="0" y="0" width="16" height="16"/><path d="M9.200,6.800 H12.600 V10.400 H15 L10.900,15.400 L6.800,10.400 H9.200Z" fill="url(#arB)" stroke="#1670BE" stroke-width=".7" stroke-linejoin="round"/></svg>
<svg class="abs" style="left:37px;top:258.8px" width="17" height="15.5" viewBox="0 0 17 15.5">
<rect x="5.200" y="1.400" width="10.600" height="9" fill="#F4F8FC" stroke="#8C98A8" stroke-width=".8"/>
<rect x="6.600" y="3" width="3.600" height="2.600" fill="#4C9CE8"/><rect x="11" y="3" width="3.400" height="1" fill="#5AA4E8"/><rect x="11" y="5" width="3.400" height="1" fill="#9CC4EE"/>
<rect x="6.600" y="6.600" width="4.600" height="2.600" fill="#58B05A"/><rect x="12" y="7" width="2.400" height="2" fill="#4C9CE8"/>
<path d="M3.200,11 H16.200 L15.200,14.600 H4.200Z" fill="#D8DEE6" stroke="#8C98A8" stroke-width=".7"/>
<circle cx="3.800" cy="3.800" r="3.300" fill="#F6F8FA" stroke="#8A94A2" stroke-width=".8"/><path d="M3.800,1.800 V3.900 H5.400" stroke="#5C6672" stroke-width=".8" fill="none"/></svg>
<svg class="abs" style="left:26.5px;top:302.3px" width="17" height="11" viewBox="0 0 17 11"><path d="M3.600,10.600 C.8,10.600 .2,7.200 2.600,6.400 C2.200,3.800 5,2.600 6.400,4 C7.400,.6 12.400,.8 12.800,4.600 C16.800,4.400 17.400,10.600 13.600,10.600 Z" fill="#0A4CB4"/><path d="M2.600,6.400 C4,5.800 5.400,6.400 6,7.400" stroke="#fff" stroke-width=".8" fill="none"/></svg>
<svg class="abs" style="left:26.5px;top:342.8px" width="17" height="16" viewBox="0 0 17 16"><defs><radialGradient id="hgB" cx=".35" cy=".3" r=".8"><stop offset="0" stop-color="#A8C8FF"/><stop offset=".5" stop-color="#2E62D8"/><stop offset="1" stop-color="#123C9C"/></radialGradient>
<radialGradient id="hgG" cx=".35" cy=".3" r=".8"><stop offset="0" stop-color="#C8F0A0"/><stop offset=".5" stop-color="#3FA83A"/><stop offset="1" stop-color="#1E7A22"/></radialGradient></defs>
<path d="M3.600,8 L11.600,3.400 L12.600,12.200Z" fill="none" stroke="#7CA4E4" stroke-width="1"/>
<circle cx="11.400" cy="3.400" r="2.900" fill="url(#hgB)"/><circle cx="3.600" cy="8.200" r="3" fill="url(#hgB)"/><circle cx="12.600" cy="12.200" r="3.200" fill="url(#hgB)"/>
<circle cx="8.600" cy="7.800" r="3.600" fill="url(#hgG)"/></svg>
<svg class="abs" style="left:26.8px;top:385px" width="17" height="14.5" viewBox="0 0 17 14.5">
<rect x="4.200" y=".5" width="12" height="9.400" fill="#E8ECF0" stroke="#7A8696" stroke-width=".8"/>
<rect x="5.400" y="1.600" width="9.600" height="7" fill="url(#dkG)"/>
<path d="M8.200,10 H12.200 L13,12.600 H7.400Z" fill="#C4CAD2"/><rect x="6" y="12.400" width="8.400" height="1.300" fill="#9AA2AE"/>
<rect x=".6" y="4.600" width="2.600" height="9.200" fill="#DDE2E8" stroke="#7A8696" stroke-width=".7"/><rect x="1.300" y="6" width="1.200" height="1" fill="#3FB03A"/></svg>
<svg class="abs" style="left:36.2px;top:404.5px" width="18" height="17" viewBox="0 0 18 17"><use href="#folderS" x="0" y="0" width="16" height="16"/><rect x="7.600" y="8" width="8" height="6" fill="url(#dkG)" stroke="#1E3270" stroke-width=".7"/><rect x="8" y="13" width="7.200" height="1.600" fill="#202020"/></svg>
<svg class="abs" style="left:36.2px;top:425.5px" width="18" height="17" viewBox="0 0 18 17"><use href="#folderS" x="0" y="0" width="16" height="16"/><rect x="7.800" y="2.600" width="7" height="11" fill="#FDFEFF" stroke="#9AA2B0" stroke-width=".7"/><rect x="10" y="4.600" width="3" height="1.600" fill="#3F8EE8"/><path d="M9,8h4.600M9,10h4.600M9,12h4.600" stroke="#B8BEC8" stroke-width=".7"/></svg>
<svg class="abs" style="left:36.2px;top:446.5px" width="18" height="17" viewBox="0 0 18 17"><use href="#folderS" x="0" y="0" width="16" height="16"/><path d="M9.200,6.400 H12.600 V10 H15 L10.900,15 L6.800,10 H9.200Z" fill="url(#arB)" stroke="#1670BE" stroke-width=".7" stroke-linejoin="round"/></svg>
<svg class="abs" style="left:36.2px;top:467.5px" width="18" height="17" viewBox="0 0 18 17"><use href="#folderS" x="0" y="0" width="16" height="16"/><path d="M9.400,3 C13,4.500 14.200,8 12.200,12.600 C12.400,9 11.600,7.400 10.400,6.800 V12.400 C10.400,14.600 6.800,14.600 7.200,12.400 C7.500,11 9,10.800 9.400,11.200 Z" fill="#2C86E0" stroke="#1A62B8" stroke-width=".4"/></svg>
<svg class="abs" style="left:36.2px;top:488.5px" width="18" height="17" viewBox="0 0 18 17"><use href="#folderS" x="0" y="0" width="16" height="16"/><rect x="7.400" y="4.600" width="8.200" height="7.800" fill="#F8FAFC" stroke="#8C98AA" stroke-width=".7"/><rect x="8.400" y="5.600" width="6.200" height="5.800" fill="#7CC0F0"/><path d="M8.400,11.400 L10.800,8.400 L12.400,10 L13.400,9 L14.600,11.400Z" fill="#3F9A4A"/></svg>
<svg class="abs" style="left:36.2px;top:509.5px" width="18" height="17" viewBox="0 0 18 17"><use href="#folderS" x="0" y="0" width="16" height="16"/><rect x="7.600" y="3.400" width="7.200" height="10.800" fill="#3A3E46"/><rect x="9" y="4.400" width="4.400" height="2.600" fill="#6AA8E8"/><rect x="9" y="7.600" width="4.400" height="2.600" fill="#E8A040"/><rect x="9" y="10.800" width="4.400" height="2.600" fill="#6AC070"/><path d="M8.100,4v10M14.300,4v10" stroke="#fff" stroke-width=".6" stroke-dasharray=".8 .8"/></svg>
<svg class="abs" style="left:37px;top:531px" width="17" height="15.5" viewBox="0 0 17 15.5">
<rect x="1.600" y=".4" width="2.900" height="2.900" fill="#1CA8F0"/><rect x="5" y=".4" width="2.900" height="2.900" fill="#1CA8F0"/><rect x="1.600" y="3.800" width="2.900" height="2.900" fill="#1CA8F0"/><rect x="5" y="3.800" width="2.900" height="2.900" fill="#1CA8F0"/>
<path d="M2.400,8 H13.600 L16,11 H.6Z" fill="#C6CCD4" stroke="#7C8694" stroke-width=".6"/>
<rect x=".6" y="11" width="15.400" height="3.800" rx=".8" fill="#8E98A6" stroke="#5C6674" stroke-width=".6"/><rect x="2" y="12.400" width="9" height="1.100" fill="#3FD048"/></svg>
<svg class="abs" style="left:204.5px;top:540.5px" width="10" height="7" viewBox="0 0 10 7"><path d="M1.200,1.200 L5,5.200 L8.800,1.200" fill="none" stroke="#4A4A4A" stroke-width="2.100"/></svg>
<svg class="abs" style="left:225.5px;top:539.5px" width="7" height="10" viewBox="0 0 7 10"><path d="M5.600,1.200 L1.600,5 L5.600,8.800" fill="none" stroke="#4A4A4A" stroke-width="2.100"/></svg>
<svg class="abs" style="left:791px;top:539.5px" width="7" height="10" viewBox="0 0 7 10"><path d="M1.400,1.200 L5.400,5 L1.400,8.800" fill="none" stroke="#4A4A4A" stroke-width="2.100"/></svg>
<svg class="abs" style="left:260px;top:559px" width="17" height="15" viewBox="0 0 17 15">
<circle cx="5.400" cy="3.600" r="2.800" fill="#4E9A4A"/><path d="M.6,13.600 C.6,8 10.200,8 10.200,13.600Z" fill="#3E8E3E"/>
<circle cx="11.200" cy="4.600" r="2.800" fill="#E8B48A"/><path d="M6.400,14.400 C6.400,9 16.200,9 16.200,14.400Z" fill="#5A7EC0"/>
<circle cx="5.400" cy="3.800" r="2" fill="#F0C49A"/></svg>
<svg class="abs" style="left:758.5px;top:556.5px" width="16" height="16" viewBox="0 0 16 16">
<rect x=".6" y="1" width="3.400" height="3.400" fill="#fff" stroke="#7A8AA0" stroke-width=".7"/><rect x="1.700" y="2.100" width="1.200" height="1.200" fill="#3A7AD0"/>
<rect x=".6" y="6" width="3.400" height="3.400" fill="#fff" stroke="#7A8AA0" stroke-width=".7"/><rect x="1.700" y="7.100" width="1.200" height="1.200" fill="#D03A3A"/>
<rect x=".6" y="11" width="3.400" height="3.400" fill="#fff" stroke="#7A8AA0" stroke-width=".7"/><rect x="1.700" y="12.100" width="1.200" height="1.200" fill="#3A7AD0"/>
<path d="M5.600,2.700h4M10.800,2.700h4M5.600,7.700h4M10.800,7.700h4M5.600,12.700h4M10.800,12.700h4" stroke="#56606E" stroke-width="1.300"/></svg>
<svg class="abs" style="left:781px;top:558px" width="14.5" height="12.5" viewBox="0 0 14.5 12.5">
<rect x=".6" y=".6" width="13.200" height="11" rx="1" fill="#F4F6FA" stroke="#6A7AA8" stroke-width="1"/>
<rect x="2" y="2" width="10.400" height="8.200" fill="#6AB4F0"/><path d="M2,10.200 L2,7 C5,5 9,8 12.400,5.600 V10.200Z" fill="#2E7A3A"/><rect x="2" y="2" width="10.400" height="2.400" fill="#CDE6FA"/></svg>
</div></div>

<!-- FRONT CMD -->
<div class="cmd" id="cmd1" style="left:156px;top:156px;background:#F0C869;box-shadow:0 0 0 1px rgba(150,110,30,.5) inset,0 0 5px rgba(90,110,160,.28)">
  <div class="ttl">C:\Windows\system32\cmd.exe</div>
  <div class="abs" style="left:623px;top:1px;width:45px;height:20px;background:#C75050"></div>
  <div class="blk">
    <div class="row" style="top:12px">C:\Users\carl\Desktop\LG_Root&gt;reg query HKLM\hardware\devicemap\SERIALCOMM</div>
    <div class="row" style="top:36px">HKEY_LOCAL_MACHINE\hardware\devicemap\SERIALCOMM</div>
    <div class="row" style="top:48px">    \Device\LGANDNETMDM0    REG_SZ    COM3</div>
    <div class="row" style="top:60px">    \Device\LGANDNETDIAG1    REG_SZ    COM4</div>
    <div class="row" style="top:96px">C:\Users\carl\Desktop\LG_Root&gt;pause</div>
    <div class="row" style="top:108px">Press any key to continue . . . </div>
    <div class="abs" style="left:256px;top:117px;width:8px;height:3px;background:#C0C0C0"></div>
  </div>
  <div class="sb"><div class="thumb"></div></div>
  <svg class="abs" style="left:12px;top:10px" width="16" height="13"><use href="#cmdico"/></svg>
  <svg class="abs" style="left:579px;top:12.400px" width="8" height="2.600"><rect width="8" height="2.600" fill="#111"/></svg>
  <svg class="abs" style="left:605px;top:7px" width="10" height="8" viewBox="0 0 10 8"><rect x=".5" y="1" width="9" height="6.500" fill="none" stroke="#111" stroke-width="1"/><rect x="0" y="0" width="10" height="2" fill="#111"/></svg>
  <svg class="abs" style="left:641.500px;top:7.600px" width="9" height="8" viewBox="0 0 9 8"><path d="M.8,.6 L8.200,7.400 M8.200,.6 L.8,7.400" stroke="#fff" stroke-width="1.700"/></svg>
  <svg class="abs" style="left:654px;top:39px" width="10" height="7" viewBox="0 0 10 7"><path d="M1.200,5.800 L5,1.800 L8.800,5.800" fill="none" stroke="#4A4A4A" stroke-width="2.100"/></svg>
  <svg class="abs" style="left:654px;top:321px" width="10" height="7" viewBox="0 0 10 7"><path d="M1.200,1.200 L5,5.200 L8.800,1.200" fill="none" stroke="#4A4A4A" stroke-width="2.100"/></svg>
</div>

<!-- TASKBAR -->
<div id="tb">
<div class="abs" style="left:0;top:0;width:1366px;height:1px;background:rgba(90,70,30,.2)"></div>
<div class="tbtn" style="left:52px;width:58px;background:linear-gradient(90deg,rgba(255,255,255,.30),rgba(255,255,255,.16))"></div>
<div class="tbtn" style="left:114px;width:58px"></div>
<div class="tbtn" style="left:362px;width:58px"></div>
<div class="tbtn" style="left:478px;width:5px;background:rgba(255,255,255,.30);box-shadow:inset 0 0 0 1px rgba(255,255,255,.45)"></div>
<div class="tbtn" style="left:424px;width:54px;background:rgba(255,255,255,.42);box-shadow:inset 0 0 0 1px rgba(255,255,255,.55)"></div>
<svg class="abs" style="left:11.5px;top:6.5px" width="27" height="26" viewBox="0 0 27 26"><path d="M0,3.800 L11,2.300 V12.300 H0Z M12.400,2.100 L26.600,0 V12.300 H12.400Z M0,13.700 H11 V23.700 L0,22.200Z M12.400,13.700 H26.600 V26 L12.400,23.900Z" fill="#fff"/></svg>
<svg class="abs" style="left:65px;top:6.5px" width="33" height="30" viewBox="0 0 33 30">
<defs><linearGradient id="exF" x1="0" y1="0" x2="0" y2="1"><stop offset="0" stop-color="#FCEFB4"/><stop offset="1" stop-color="#F2D878"/></linearGradient>
<linearGradient id="exB" x1="0" y1="0" x2="0" y2="1"><stop offset="0" stop-color="#8CD0F4"/><stop offset="1" stop-color="#3C98D8"/></linearGradient></defs>
<path d="M2,4.600 H12 L13.600,7 H29 V26 H2Z" fill="#EACB62" stroke="#D8B040" stroke-width=".7"/>
<path d="M7,3.400 H17 L18.400,5.600 H30 V10 H7Z" fill="#F6E08C" stroke="#D8B040" stroke-width=".6"/>
<rect x="3.600" y=".8" width="3.400" height="2.200" fill="#2FB040"/><rect x="12" y="3" width="3.400" height="2.200" fill="#E03A2E"/><rect x="20.400" y="4.800" width="3.400" height="2.200" fill="#2E8EE8"/>
<path d="M1,9.400 H31.600 L30.400,26.600 H2.200Z" fill="url(#exF)" stroke="#DDB84C" stroke-width=".7"/>
<path d="M4.600,29 V19.600 C4.600,17.600 6,16.400 8,16.400 H25.600 C27.600,16.400 29,17.600 29,19.600 V29 H23.400 V22.600 H10.200 V29Z" fill="url(#exB)" stroke="#2A7EC4" stroke-width=".8"/>
<path d="M6.400,18.600 H27" stroke="#D6F0FF" stroke-width="1.200" opacity=".8"/>
</svg>
<svg class="abs" style="left:128.5px;top:5.8px" width="29" height="29" viewBox="0 0 29 29"><use href="#chrome" width="29" height="29"/></svg>
<svg class="abs" style="left:190px;top:4.5px" width="30.5" height="31" viewBox="0 0 30.5 31">
<path d="M13,3.600 H29.400 V27.400 H13Z" fill="#fff" stroke="#2A5699" stroke-width="1.100"/>
<path d="M18.600,7.400h8.600M18.600,10.600h8.600M18.600,13.800h8.600M18.600,17h8.600M18.600,20.200h8.600M18.600,23.400h8.600" stroke="#2A5699" stroke-width="1.300"/>
<path d="M0,3.600 L17.600,.4 V30.600 L0,27.400Z" fill="#2A5699"/>
<path d="M3.600,10.200 L5.800,20.600 L8.400,12.600 L11,20.600 L13.400,10.200" fill="none" stroke="#fff" stroke-width="2" stroke-linejoin="miter"/>
</svg>
<svg class="abs" style="left:252px;top:4.5px" width="30.5" height="31" viewBox="0 0 30.5 31">
<path d="M13,3.600 H29.400 V27.400 H13Z" fill="#fff" stroke="#D04424" stroke-width="1.100"/>
<path d="M22.600,6.600 A5.600,5.600 0 1 0 28.200,12.200 H22.600Z" fill="#D04424"/><path d="M24,5.200 A5.400,5.400 0 0 1 29.400,10.600 H24Z" fill="#D04424"/>
<path d="M18.600,20.400h8.600M18.600,23.600h8.600" stroke="#D04424" stroke-width="1.400"/>
<path d="M0,3.600 L17.600,.4 V30.600 L0,27.400Z" fill="#D04424"/>
<path d="M5.400,21 V10.200 H9.400 C13.600,10.200 13.600,16.200 9.400,16.200 H5.400" fill="none" stroke="#fff" stroke-width="2.300"/>
</svg>
<svg class="abs" style="left:312.500px;top:8px" width="34" height="27" viewBox="0 0 34 27">
<defs><linearGradient id="mmF" x1="0" y1="0" x2="1" y2="0"><stop offset="0" stop-color="#2F6FBC"/><stop offset=".5" stop-color="#5AA0E0"/><stop offset="1" stop-color="#8CC4F0"/></linearGradient>
<linearGradient id="mmO" x1="0" y1="0" x2="1" y2="1"><stop offset="0" stop-color="#F8A020"/><stop offset=".5" stop-color="#F0501A"/><stop offset="1" stop-color="#E83A14"/></linearGradient></defs>
<path d="M.7,4.300 C8,1.600 16,.8 24.400,.8 C22,9 21,18 21.800,25.800 C15,23 9,21.500 2.400,21 C1,15 .4,10 .7,4.300Z" fill="url(#mmF)" stroke="#2A62A8" stroke-width=".5"/>
<path d="M7.300,3.200 C11,2.400 15,2.200 18.800,2.200 L18,8.200 C14.500,8.200 10.500,8.500 7,9.200Z" fill="url(#mmO)"/>
<path d="M5.600,10.600 C9.500,9.800 13.500,9.500 17.300,9.500 L16.800,17.200 C13,17.200 9.500,17.500 5.800,18.200Z" fill="url(#mmO)"/>
<path d="M6.400,19.600 C10,19 13.500,18.800 16.900,18.900 L17.200,23.400 C14,22.600 10.500,22 6.800,21.600Z" fill="url(#mmO)"/>
<circle cx="12" cy="5.400" r="1.300" fill="#FFD24A" opacity=".9"/><circle cx="11" cy="13.800" r="1.500" fill="#FFD24A" opacity=".9"/>
<path d="M2.600,5.200v1M2.400,8v1M2.400,11v1M2.600,14v1M2.900,17v1M3.300,19.600v.8" stroke="#CFE6FA" stroke-width="1"/>
<path d="M20.900,14.600 L29.600,13.800 L32.300,18.400 L22.400,19.600Z" fill="#8EC0EA" opacity=".95"/>
<path d="M25.300,1.600 C20.500,8 19.500,17 22.600,24.600 C25.500,22 25.600,15.800 28.600,13.400 C30,12.400 31.400,13.800 32,15.600" fill="none" stroke="#F4B848" stroke-width="2" stroke-linecap="round"/>
<path d="M25.300,1.600 C21.500,8 20.500,17 22.600,24.600" fill="none" stroke="#FBE0A0" stroke-width=".8" stroke-linecap="round"/>
</svg>
<svg class="abs" style="left:374.500px;top:3.500px" width="34" height="33" viewBox="0 0 34 33">
<defs><linearGradient id="ptP" x1="0" y1="0" x2="1" y2="1"><stop offset="0" stop-color="#EEF7FD"/><stop offset=".6" stop-color="#C4DFF4"/><stop offset="1" stop-color="#8FC0E6"/></linearGradient></defs>
<path d="M.4,19.600 C.4,12 8,7 17,6.600 C25,6.400 29.600,10.600 29.400,16.400 C29.200,23 22,29.600 14.400,29.400 C9.600,29.200 7.800,27.400 8.400,25.400 C9,23.400 7,22.600 4.600,23.800 C2,25 .4,23 .4,19.600Z" fill="url(#ptP)" stroke="#5E9CD0" stroke-width=".8"/>
<circle cx="13.800" cy="20.200" r="2.100" fill="#C9A257" stroke="#5E9CD0" stroke-width=".8"/>
<circle cx="5.900" cy="18" r="2.500" fill="#E23A34"/><circle cx="10.700" cy="13.200" r="2.400" fill="#4FB848"/><circle cx="17.300" cy="11" r="2.500" fill="#F6A81E"/>
<circle cx="5.300" cy="17.300" r=".9" fill="#F59C98"/><circle cx="10.100" cy="12.500" r=".9" fill="#B0E6A8"/><circle cx="16.700" cy="10.300" r=".9" fill="#FCE09A"/>
<path d="M15.400,31.800 L23.600,12.200 L25.800,13 L17,32.200Z" fill="#F08A2E" stroke="#C86418" stroke-width=".4"/>
<path d="M23.600,12.200 L25.400,7.600 L27.400,8.400 L25.800,13Z" fill="#9CA4AE"/>
<path d="M25.400,7.600 C25.600,4.600 27,2.400 29.600,1.600 C31.600,2 32.600,4 32,5.600 C30.800,6.400 28.800,7.200 27.400,8.400Z" fill="#D9B584" stroke="#B08C5C" stroke-width=".4"/>
</svg>
<svg class="abs" style="left:434px;top:7.5px" width="30" height="24" viewBox="0 0 30 24">
<rect x="0" y="0" width="30" height="24" fill="#C4C4C4"/>
<rect x="1" y=".8" width="28" height="2.400" fill="#9C9C9C"/><rect x="22" y="1.200" width="1.400" height="1" fill="#222"/><rect x="24.200" y="1.200" width="1.400" height="1" fill="#222"/><rect x="26.400" y="1.200" width="1.400" height="1" fill="#222"/>
<rect x="1" y="3.600" width="28" height="19.600" fill="#000"/>
<path d="M6.800,7.400 H5.400 C4,7.400 4,11.800 5.400,11.800 H6.800" fill="none" stroke="#fff" stroke-width="1.200"/>
<rect x="8.400" y="8" width="1.200" height="1.200" fill="#fff"/><rect x="8.400" y="10.600" width="1.200" height="1.200" fill="#fff"/>
<path d="M11,6.800 L14,11.800" stroke="#fff" stroke-width="1.200"/>
<rect x="15.600" y="11" width="6.400" height="1.300" fill="#fff"/>
</svg>
<svg class="abs" style="left:1171px;top:18.5px" width="9" height="5.5" viewBox="0 0 9 5.5"><path d="M0,5.400 L4.500,0 L9,5.400Z" fill="#fff"/></svg>
<svg class="abs" style="left:1191.5px;top:13px" width="17.5" height="16" viewBox="0 0 17.5 16">
<rect x="1" y=".4" width="1.500" height="15.400" fill="#fff"/>
<path d="M2.500,1.400 C5,-.2 7,2.600 9.400,1.800 C11,1.200 12,2 13.400,2.400 V9 C12,8.600 11,7.800 9.400,8.400 C7,9.200 5,6.400 2.500,8Z" fill="#fff"/>
<circle cx="11.600" cy="11.200" r="4.600" fill="#E0322C" stroke="#fff" stroke-width=".8"/>
<path d="M9.600,9.200 L13.600,13.200 M13.600,9.200 L9.600,13.200" stroke="#fff" stroke-width="1.500"/>
</svg>
<svg class="abs" style="left:1222px;top:13px" width="11" height="16" viewBox="0 0 11 16">
<rect x="3.400" y=".2" width="3.600" height="1.600" fill="#fff"/>
<rect x="1.400" y="1.800" width="7.600" height="12.800" rx=".8" fill="none" stroke="#fff" stroke-width="1.400"/>
<rect x="3" y="3.400" width="4.400" height="5" fill="#8C6A28"/>
<path d="M5.200,7.400 L10.400,15.600 H0Z" fill="#F8C820" stroke="#B88A10" stroke-width=".4"/>
<rect x="4.700" y="10" width="1.100" height="3" fill="#222"/><rect x="4.700" y="13.600" width="1.100" height="1.100" fill="#222"/>
</svg>
<svg class="abs" style="left:1240px;top:14.5px" width="16.5" height="12" viewBox="0 0 16.5 12">
<rect x="0" y="9.600" width="2.200" height="2.200" fill="#fff"/><rect x="3.400" y="7.400" width="2.200" height="4.400" fill="#fff"/><rect x="6.800" y="5" width="2.200" height="6.800" fill="#fff"/><rect x="10.200" y="2.600" width="2.200" height="9.200" fill="#fff"/>
<rect x="13.600" y=".4" width="2.400" height="11.400" fill="#fff"/><rect x="0" y="11" width="16" height=".9" fill="#fff"/>
</svg>
<svg class="abs" style="left:1263.5px;top:13.5px" width="17" height="14.5" viewBox="0 0 17 14.5">
<path d="M.6,4.600 H3.400 L7.600,.6 V14 L3.400,10 H.6Z" fill="none" stroke="#fff" stroke-width="1.100" stroke-linejoin="round"/>
<path d="M9.600,4.800 C10.800,6.200 10.800,8.400 9.600,9.800 M11.600,2.800 C13.800,5.200 13.800,9.400 11.600,11.800 M13.600,1 C16.800,4.400 16.800,10.200 13.600,13.600" fill="none" stroke="#fff" stroke-width="1.100"/>
</svg>
<div class="clk" style="top:6px">2:44 AM</div><div class="clk" style="top:22.500px">3/9/2015</div>
</div>
</body>
</html>
